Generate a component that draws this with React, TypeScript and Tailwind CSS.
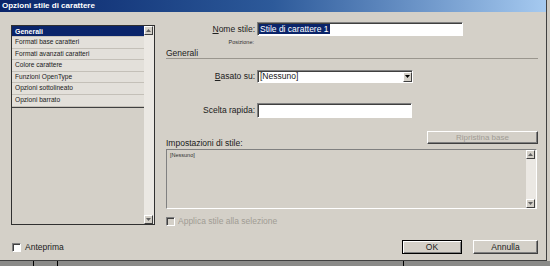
import React from "react";

const font = { fontFamily: '"Liberation Sans", Tahoma, Arial, sans-serif' };

function Arrow({ dir }: { dir: "up" | "down" }) {
  return (
    <div className="w-[9px] h-[9px] bg-[#d4d0c8] border border-t-white border-l-white border-r-[#404040] border-b-[#404040] flex items-center justify-center">
      <svg width="5" height="3" viewBox="0 0 5 3">
        {dir === "up" ? <path d="M2.5 0L5 3H0z" fill="#606060" /> : <path d="M0 0H5L2.5 3z" fill="#606060" />}
      </svg>
    </div>
  );
}

function Check({ disabled }: { disabled?: boolean }) {
  return (
    <div
      className={
        "w-[9px] h-[9px] border border-t-[#808080] border-l-[#808080] border-r-white border-b-white shadow-[inset_1px_1px_0_#404040] " +
        (disabled ? "bg-[#d4d0c8]" : "bg-white")
      }
    />
  );
}

const items = [
  "Formati base caratteri",
  "Formati avanzati caratteri",
  "Colore carattere",
  "Funzioni OpenType",
  "Opzioni sottolineato",
  "Opzioni barrato",
];

export default function App() {
  return (
    <div className="w-[550px] h-[266px] bg-[#8a8a88] overflow-hidden flex flex-col" style={font}>
      <div className="flex h-[261px]">
        <div className="w-[547px] h-[261px] bg-[#d4d0c8] border-r border-b border-[#404040] flex flex-col">
          {/* title */}
          <div className="h-[12px] bg-gradient-to-r from-[#0a246a] via-[#2d5a9a] to-[#a6caf0] flex items-center pl-[2px]">
            <span className="text-white font-bold text-[8px] leading-none">Opzioni stile di carattere</span>
          </div>
          {/* body */}
          <div className="flex pl-[11px] pt-[10px]">
            {/* list */}
            <div className="mt-[3px] w-[144px] h-[200px] border border-[#303030] flex bg-[#d4d0c8]">
              <div className="flex-1 flex flex-col">
                <div className="h-[11px] bg-[#0a246a] text-white font-bold text-[7px] leading-none flex items-center pl-[3px] border-b border-[#c8c4bc]">
                  Generali
                </div>
                {items.map((t) => (
                  <div
                    key={t}
                    className="h-[11.6px] bg-[#e3e0da] text-[#1a1a1a] text-[6.6px] leading-none flex items-center pl-[3px] border-b border-[#c4c0b8]"
                  >
                    {t}
                  </div>
                ))}
                <div className="border-t border-[#404040]" />
              </div>
              <div className="w-[10px] bg-[#ebe8e3] flex flex-col justify-between">
                <Arrow dir="up" />
                <Arrow dir="down" />
              </div>
            </div>
            {/* right panel */}
            <div className="ml-[11px] w-[372px] flex flex-col">
              <div className="h-[14px] flex items-center">
                <div className="w-[91px] text-right pr-[2px] text-[8.5px] text-[#202020] leading-none">
                  <span className="underline">N</span>ome stile:
                </div>
                <div className="w-[206px] h-[14px] bg-white border border-t-[#808080] border-l-[#808080] border-r-white border-b-white shadow-[inset_1px_1px_0_#404040] flex items-center pl-[1px]">
                  <span className="bg-[#0a246a] text-white text-[8.5px] leading-none px-[1px] py-[1px]">Stile di carattere 1</span>
                </div>
              </div>
              <div className="mt-[4px] h-[8px] w-[88px] text-right text-[5.5px] text-[#303030] leading-none">Posizione:</div>
              <div className="h-[11px] border-b border-[#9a968e] text-[8.5px] text-[#202020] leading-none flex items-center">
                Generali
              </div>
              <div className="mt-[11px] h-[13px] flex items-center">
                <div className="w-[91px] text-right pr-[2px] text-[8.5px] text-[#202020] leading-none">
                  <span className="underline">B</span>asato su:
                </div>
                <div className="w-[156px] h-[13px] bg-white border border-t-[#808080] border-l-[#808080] border-r-white border-b-white shadow-[inset_1px_1px_0_#404040] flex items-center justify-between pl-[2px]">
                  <span className="text-[8.5px] text-[#202020] leading-none">[Nessuno]</span>
                  <div className="w-[9px] h-[10px] bg-[#d4d0c8] border border-t-white border-l-white border-r-[#404040] border-b-[#404040] flex items-center justify-center">
                    <svg width="5" height="3" viewBox="0 0 5 3">
                      <path d="M0 0H5L2.5 3z" fill="#000" />
                    </svg>
                  </div>
                </div>
              </div>
              <div className="mt-[20px] h-[15px] flex items-center">
                <div className="w-[91px] text-right pr-[2px] text-[8.5px] text-[#202020] leading-none">Scelta rapida:</div>
                <div className="w-[155px] h-[15px] bg-white border border-t-[#808080] border-l-[#808080] border-r-white border-b-white shadow-[inset_1px_1px_0_#404040]" />
              </div>
              <div className="mt-[13px] h-[18px] flex justify-between">
                <div className="self-end pb-[2px] text-[8.5px] text-[#202020] leading-none">Impostazioni di stile:</div>
                <div className="w-[111px] h-[13px] bg-[#d4d0c8] border border-t-white border-l-white border-r-[#404040] border-b-[#404040] shadow-[inset_-1px_-1px_0_#808080] flex items-center justify-center">
                  <span className="text-[8px] text-[#a09c94] leading-none">Ripristina base</span>
                </div>
              </div>
              <div className="h-[60px] w-[371px] border border-t-[#808080] border-l-[#808080] border-r-white border-b-white bg-[#d4d0c8] flex">
                <div className="flex-1 pl-[3px] pt-[3px] text-[5.5px] text-[#303030] leading-none">[Nessuno]</div>
                <div className="w-[10px] bg-[#ebe8e3] flex flex-col justify-between">
                  <Arrow dir="up" />
                  <Arrow dir="down" />
                </div>
              </div>
              <div className="mt-[8px] h-[9px] flex items-center gap-[3px]">
                <Check disabled />
                <span className="text-[8.5px] text-[#a09c94] leading-none">Applica stile alla selezione</span>
              </div>
            </div>
          </div>
          {/* bottom row */}
          <div className="mt-[14px] h-[14px] flex items-center pl-[12px] pr-[8px]">
            <Check />
            <span className="ml-[4px] text-[8.5px] text-[#202020] leading-none">Anteprima</span>
            <div className="ml-auto w-[60px] h-[14px] bg-[#d4d0c8] border border-black shadow-[inset_1px_1px_0_#fff,inset_-1px_-1px_0_#808080] flex items-center justify-center">
              <span className="text-[8.5px] text-[#202020] leading-none">OK</span>
            </div>
            <div className="ml-[11px] w-[65px] h-[14px] bg-[#d4d0c8] border border-t-white border-l-white border-r-[#404040] border-b-[#404040] shadow-[inset_-1px_-1px_0_#808080] flex items-center justify-center">
              <span className="text-[8.5px] text-[#202020] leading-none">Annulla</span>
            </div>
          </div>
        </div>
        <div className="w-[3px] bg-[#cfcbc3]" />
      </div>
      <div className="flex-1 flex">
        <div className="ml-[33px] w-[1px] bg-black" />
        <div className="ml-[23px] w-[1px] bg-black" />
        <div className="ml-[345px] w-[1px] bg-black" />
      </div>
    </div>
  );
}
